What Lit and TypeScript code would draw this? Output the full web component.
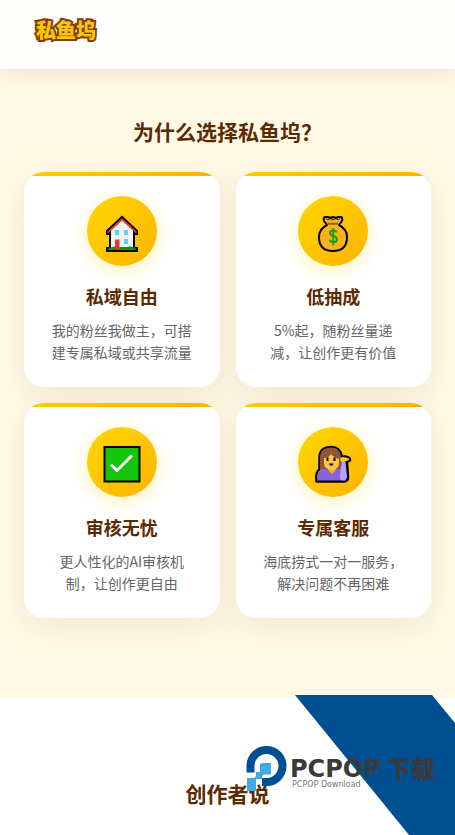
import { LitElement, html, svg, css } from "lit";
import { customElement, property } from "lit/decorators.js";

const house = svg`
  <path d="M35 19.500 19 34.500V39h3v12h-3v5h32v-5h-3V39h3v-4.500z" fill="#000"/>
  <path d="M35 24 24 34.500V54h22V34.500z" fill="#f2f2f2"/>
  <path d="M35 22 20.500 35.500v2.200L35 24.500l14.500 13.200v-2.200z" fill="#e8402a"/>
  <path d="M28 34h4v5h-4zM37 34h4v5h-4zM37 43h4v5h-4z" fill="#55d5f5"/>
  <path d="M21 54q0-3 4-3 3-1 6 0h9q3-1 6 0 3 0 3 3z" fill="#138a1c"/>
  <path d="M28 43.500h4.500v9.500h-4.500z" fill="#e23a24"/>`;

const moneyBag = svg`
  <path d="M27 21h3l2 1 3-1 3 1 2-1h3q2 1 1 4l-3 4q8 4 8 12 0 14-14 14T21 41q0-8 8-12l-3-4q-1-3 1-4z"
    fill="#fcb415" stroke="#000" stroke-width="2" stroke-linejoin="round"/>
  <path d="M28 22.500 30 24l2-1.500 3 1.500 3-1.500 2 1.500 2-1.500" fill="none" stroke="#3a2405" stroke-width="1"/>
  <path d="M29.500 27.800h11" stroke="#8c5a3c" stroke-width="2"/>
  <path d="M38.500 36.500q-.5-2-3-2-3.500 0-3.500 2.500 0 2 3.300 3 3.700 1 3.700 3.500 0 2.700-3.700 2.700-3 0-3.500-2.500M35.300 32v17.500"
    fill="none" stroke="#16a01c" stroke-width="2"/>`;

const tick = svg`
  <path d="M17.500 20h35v34.500h-35z" fill="#16c60c" stroke="#000" stroke-width="2"/>
  <path d="M24 37.500 30 43.500 45 28.500" fill="none" stroke="#fff" stroke-width="3"/>`;

const agent = svg`
  <path d="M18.500 54.500q-1-10 3-12V31q0-11 12-11 8 0 10.500 9.500h3.500q5 1 4.500 4l-3 1.500 1 15q0 4.500-5 4.500z"
    fill="#000" stroke="#000" stroke-width="2.500" stroke-linejoin="round"/>
  <path d="M22 42V31q0-10.500 11.500-10.500Q42 20.500 43 30v14H22z" fill="#8d5539"/>
  <path d="M19 53.500V49q0-6 6-7h14q5 0 7 3l2 8.500z" fill="#8764d8"/>
  <path d="M30 41h7l1 2-4 4-4-4z" fill="#f3b52c"/>
  <path d="M26 31q5 0 7-4 3 4 8 5v4q0 6.500-7.500 6.500T26 36z" fill="#ffc83d"/>
  <path d="M42.500 33.500q-1-2.500 1.500-3.500l4 .5q3 .5 3.500 2l-4 2-4 1z" fill="#ffc83d"/>
  <path d="M43.500 35h4l1.500 14.500q0 4-4 4-3.500 0-3-5z" fill="#b4a0ff"/>
  <path d="M29.500 30.500v3.500M36.500 30.500v3.500" stroke="#000" stroke-width="2"/>
  <path d="M31 36.500h4.500q-.2 2.300-2.200 2.300T31 36.500z" fill="#000"/>`;

const features = [
  { icon: house, title: "私域自由", text: "我的粉丝我做主，可搭建专属私域或共享流量" },
  { icon: moneyBag, title: "低抽成", text: "5%起，随粉丝量递减，让创作更有价值" },
  { icon: tick, title: "审核无忧", text: "更人性化的AI审核机制，让创作更自由" },
  { icon: agent, title: "专属客服", text: "海底捞式一对一服务，解决问题不再困难" },
];

@customElement("feature-card")
class FeatureCard extends LitElement {
  @property({ attribute: false }) icon: unknown;
  @property() heading = "";
  @property() text = "";

  static styles = css`
    :host {
      display: block;
      overflow: hidden;
      border-radius: 20px;
      background: linear-gradient(90deg, #ffcc00, #ffb300) top / 100% 4px no-repeat #fff;
      box-shadow: 0 8px 32px rgba(110, 90, 20, 0.1);
      padding: 24px 26px;
      text-align: center;
    }
    .badge {
      width: 70px;
      height: 70px;
      margin: 0 auto 16px;
      border-radius: 50%;
      background: linear-gradient(135deg, #ffd700, #ffb300);
      box-shadow: 0 4px 20px rgba(255, 215, 0, 0.3);
    }
    .badge svg {
      display: block;
      width: 100%;
      height: 100%;
    }
    h3 {
      margin: 0 0 8px;
      font-size: 18px;
      line-height: 29px;
      font-weight: 700;
      color: #5c2a00;
    }
    p {
      margin: 0;
      font-size: 14px;
      line-height: 22px;
      color: #666;
    }
  `;

  render() {
    return html`
      <div class="badge"><svg viewBox="0 0 70 70" aria-hidden="true">${this.icon}</svg></div>
      <h3>${this.heading}</h3>
      <p>${this.text}</p>
    `;
  }
}

@customElement("download-mark")
class DownloadMark extends LitElement {
  static styles = css`
    :host {
      display: block;
      width: 220px;
      height: 140px;
      overflow: hidden;
      pointer-events: none;
    }
    svg {
      display: block;
    }
    .name {
      font: 700 24px "DejaVu Sans", sans-serif;
      fill: #3a3a3c;
    }
    .cjk {
      font: 900 24px "Noto Sans CJK SC", sans-serif;
      fill: #3a3a3c;
    }
    .sub {
      font: 400 8px "DejaVu Sans", sans-serif;
      fill: #777;
    }
  `;

  render() {
    return html`
      <svg width="220" height="140" viewBox="235 695 220 140">
        <path d="M295 695h137l23 28v112h-46z" fill="#005091" />
        <path
          d="M250.500 772.500V766a16 16 0 1 1 16 16h-4.500"
          fill="none"
          stroke="#005091"
          stroke-width="8"
        />
        <path
          d="M262 763h9v11.500h-6q-3 0-3 3v1.500h-6v12h-9v-13h6q3 0 3-3v-3h4v-7q0-2 2-2z"
          fill="#41a9e4"
        />
        <text class="name" x="290" y="777">PCPOP</text>
        <text class="cjk" x="387" y="778">下载</text>
        <text class="sub" x="292" y="787">PCPOP Download</text>
      </svg>
    `;
  }
}

@customElement("app-root")
class AppRoot extends LitElement {
  static styles = css`
    :host {
      display: flex;
      flex-direction: column;
      min-height: 100vh;
      background: #fff;
      font-family: "Noto Sans CJK SC", sans-serif;
    }
    header {
      position: relative;
      z-index: 1;
      padding: 12px 32px;
      background: #fefefd;
      border-bottom: 1px solid #eee9df;
      box-shadow: 0 4px 24px rgba(110, 90, 20, 0.1);
    }
    .logo {
      display: block;
      width: 72px;
      height: 45px;
    }
    .logo text {
      font: 900 20px "Noto Sans CJK SC", sans-serif;
      fill: #fac800;
      stroke: #843c0c;
      stroke-width: 4px;
      stroke-linejoin: miter;
      stroke-miterlimit: 3;
      paint-order: stroke;
    }
    h2 {
      margin: 0;
      text-align: center;
      font-size: 21px;
      line-height: 30px;
      font-weight: 700;
      color: #5c2a00;
    }
    .why {
      padding: 46px 24px 80px;
      background: #fff9e6;
    }
    .grid {
      display: grid;
      grid-template-columns: repeat(2, 1fr);
      gap: 16px;
      margin-top: 26px;
    }
    .voices {
      position: relative;
      flex: 1;
      padding: 80px 24px 24px;
    }
    download-mark {
      position: absolute;
      right: 0;
      top: -3px;
    }
  `;

  render() {
    return html`
      <header>
        <a class="logo" href="#" aria-label="私鱼坞">
          <svg width="72" height="45" viewBox="0 0 72 45">
            <text x="4" y="26">私鱼坞</text>
          </svg>
        </a>
      </header>
      <section class="why">
        <h2>为什么选择私鱼坞？</h2>
        <div class="grid">
          ${features.map(
            (f) => html`<feature-card .icon=${f.icon} .heading=${f.title} .text=${f.text}></feature-card>`
          )}
        </div>
      </section>
      <section class="voices">
        <h2>创作者说</h2>
        <download-mark></download-mark>
      </section>
    `;
  }
}
